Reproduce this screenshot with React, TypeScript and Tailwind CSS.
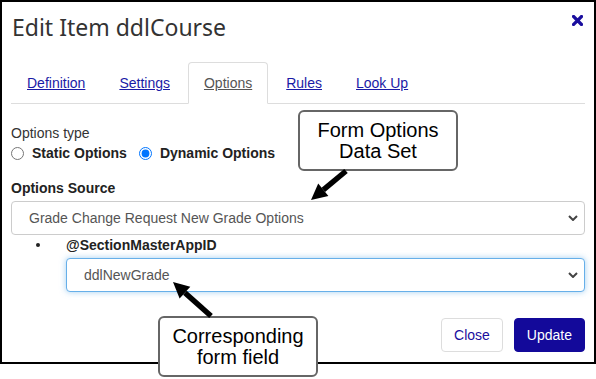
import React from 'react';

const tabs = ['Definition', 'Settings', 'Options', 'Rules', 'Look Up'];

function Chevron() {
  return (
    <svg width="10" height="6" viewBox="0 0 10 6" className="shrink-0">
      <polyline points="1,1 5,5 9,1" fill="none" stroke="#444" strokeWidth="2" />
    </svg>
  );
}

function FakeSelect({ value, focused }: { value: string; focused?: boolean }) {
  return (
    <div
      className={`h-[34px] flex items-center justify-between pl-[17px] pr-[6px] rounded-[4px] border text-[14px] text-[#555] bg-white ${
        focused
          ? 'border-[#66afe9] shadow-[0_0_6px_rgba(102,175,233,0.6)]'
          : 'border-[#ccc]'
      }`}
    >
      <span>{value}</span>
      <Chevron />
    </div>
  );
}

function Callout({ lines, className }: { lines: string[]; className: string }) {
  return (
    <div
      className={`absolute w-[160px] h-[61px] bg-white border-2 border-[#666] rounded-[6px] flex flex-col items-center justify-center text-[20px] leading-[21px] text-black ${className}`}
    >
      {lines.map((l) => (
        <span key={l}>{l}</span>
      ))}
    </div>
  );
}

export default function App() {
  return (
    <div
      className="relative w-[596px] h-[379px] bg-white overflow-hidden text-[14px] leading-5 text-[#333]"
      style={{ fontFamily: '"Liberation Sans", Arial, sans-serif' }}
    >
      <div className="h-[364px] border-2 border-black flex flex-col px-[9px]">
        {/* Header */}
        <div className="h-[60px] flex items-start justify-between">
          <h1
            className="mt-[14px] ml-[1px] text-[23px] leading-[23px] text-[#333] font-normal"
            style={{ fontFamily: '"Noto Sans", sans-serif' }}
          >
            Edit Item ddlCourse
          </h1>
          <svg width="11" height="11" viewBox="0 0 11 11" className="mt-[13px] mr-[2px]">
            <path d="M1.5 1.5 L9.5 9.5 M9.5 1.5 L1.5 9.5" stroke="#1a0e9e" strokeWidth="3.2" strokeLinecap="square" />
          </svg>
        </div>

        {/* Tabs */}
        <ul className="flex border-b border-[#ddd]">
          {tabs.map((t) => {
            const active = t === 'Options';
            return (
              <li
                key={t}
                className={`-mb-px mr-[2px] px-[15px] py-[10px] leading-5 border rounded-t-[4px] underline ${
                  active
                    ? 'border-[#ddd] border-b-white bg-white text-[#555]'
                    : 'border-transparent text-[#1a1aa6]'
                }`}
              >
                {t}
              </li>
            );
          })}
        </ul>

        {/* Body */}
        <div className="mt-[19px]">Options type</div>
        <div className="flex items-center h-5 font-bold text-[#222]">
          <input type="radio" name="ot" readOnly className="m-0 w-[13px] h-[13px]" />
          <span className="ml-[8px]">Static Options</span>
          <input type="radio" name="ot" readOnly checked className="m-0 ml-[12px] w-[13px] h-[13px]" />
          <span className="ml-[8px]">Dynamic Options</span>
        </div>

        <div className="mt-[15px] font-bold text-[#222]">Options Source</div>
        <div className="mt-[3px]">
          <FakeSelect value="Grade Change Request New Grade Options" />
        </div>

        <div className="flex">
          <div className="w-[55px] shrink-0">
            <div className="ml-[25px] mt-[8px] w-[4px] h-[4px] rounded-full bg-[#222]" />
          </div>
          <div className="flex-1">
            <div className="font-bold text-[#222]">@SectionMasterAppID</div>
            <div className="mt-[3px]">
              <FakeSelect value="ddlNewGrade" focused />
            </div>
          </div>
        </div>

        {/* Footer */}
        <div className="mt-[26px] flex justify-end gap-[11px]">
          <button className="h-[34px] px-[12px] rounded-[4px] border border-[#ddd] bg-white text-[#1a0e9e]">
            Close
          </button>
          <button className="h-[34px] px-[12px] rounded-[4px] border border-[#13099a] bg-[#13099a] text-white">
            Update
          </button>
        </div>
      </div>

      {/* Annotations */}
      <Callout lines={['Form Options', 'Data Set']} className="left-[298px] top-[110px]" />
      <Callout lines={['Corresponding', 'form field']} className="left-[158px] top-[316px]" />
      <svg className="absolute inset-0 pointer-events-none" width="596" height="379">
        <line x1="346" y1="171" x2="323.3" y2="189.8" stroke="#000" strokeWidth="5.5" />
        <polygon points="311,200 328.4,196 318.2,183.6" fill="#000" />
        <line x1="211" y1="316" x2="184.9" y2="292.7" stroke="#000" strokeWidth="5.5" />
        <polygon points="173,282 190.3,286.7 179.6,298.6" fill="#000" />
      </svg>
    </div>
  );
}
